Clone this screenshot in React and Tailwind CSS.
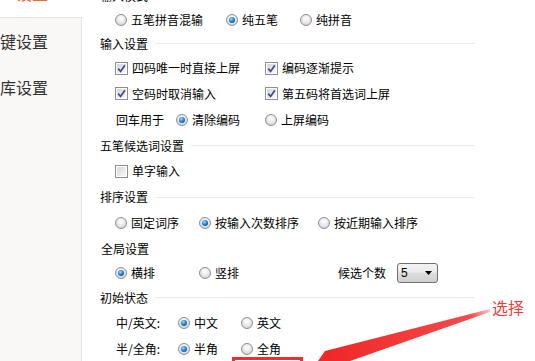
import React from "react";

const Radio = ({ checked }) => (
  <span className="inline-flex h-[12px] w-[12px] shrink-0 items-center justify-center rounded-full border border-[#8c8e90] bg-[radial-gradient(circle_at_50%_35%,#ffffff,#e8e8e8_50%,#c6c6c6)]">
    {checked && (
      <span className="h-[6px] w-[6px] rounded-full bg-[radial-gradient(circle_at_40%_35%,#9ee0ff,#1a78d0_50%,#0a3570)]" />
    )}
  </span>
);

const Check = ({ checked }) => (
  <span className="inline-flex h-[13px] w-[13px] shrink-0 border border-[#8f8f8f] bg-white p-[1px]">
    <span className="flex h-full w-full items-center justify-center bg-[linear-gradient(135deg,#d6d6d6,#f8f8f8)]">
      {checked && (
        <svg width="9" height="9" viewBox="0 0 9 9">
          <path d="M1.2 4.6 L3.6 7.4 L7.9 1.2" stroke="#3a4d8f" strokeWidth="1.7" fill="none" />
        </svg>
      )}
    </span>
  </span>
);

const Opt = ({ type = "radio", checked, label, w }) => (
  <label className={`flex items-center gap-[4px] ${w || ""}`}>
    {type === "radio" ? <Radio checked={checked} /> : <Check checked={checked} />}
    <span className="whitespace-nowrap">{label}</span>
  </label>
);

const Header = ({ title, h, line = true }) => (
  <div className={`flex items-center ${h}`}>
    <span className="whitespace-nowrap">{title}</span>
    {line && <span className="ml-[7px] h-px flex-1 bg-[#ebebeb]" />}
  </div>
);

export default function App() {
  return (
    <div className="relative flex h-[361px] w-[535px] overflow-hidden bg-white font-['Noto_Sans_CJK_SC',sans-serif] text-[12px] leading-none text-black">
      {/* left tabs */}
      <div className="flex w-[82px] shrink-0 flex-col text-[16px]">
        <div className="-mt-[31px] flex h-[48px] shrink-0 items-center pl-[16px] text-[#f0662e]">
          <span className="whitespace-nowrap">设置</span>
        </div>
        <div className="flex flex-1 flex-col border-t border-r border-[#e3e3e3] bg-[#f9f8f6] text-[#333333]">
          <div className="flex h-[46px] items-center">
            <span className="whitespace-nowrap">键设置</span>
          </div>
          <div className="flex h-[46px] items-center">
            <span className="whitespace-nowrap">库设置</span>
          </div>
        </div>
      </div>

      {/* settings */}
      <div className="-mt-[16px] flex w-[393px] shrink-0 flex-col pl-[18px]">
        <Header title="输入模式" h="h-[24px]" line={false} />
        <div className="flex h-[24px] items-center pl-[15px]">
          <Opt label="五笔拼音混输" w="w-[111px]" />
          <Opt label="纯五笔" checked w="w-[74px]" />
          <Opt label="纯拼音" />
        </div>

        <Header title="输入设置" h="h-[24px]" />
        <div className="flex h-[25px] items-center pl-[15px]">
          <Opt type="check" checked label="四码唯一时直接上屏" w="w-[150px]" />
          <Opt type="check" checked label="编码逐渐提示" />
        </div>
        <div className="flex h-[26px] items-center pl-[15px]">
          <Opt type="check" checked label="空码时取消输入" w="w-[150px]" />
          <Opt type="check" checked label="第五码将首选词上屏" />
        </div>
        <div className="flex h-[26px] items-center pl-[16px]">
          <span className="w-[60px]">回车用于</span>
          <Opt label="清除编码" checked w="w-[89px]" />
          <Opt label="上屏编码" />
        </div>

        <Header title="五笔候选词设置" h="h-[26px]" />
        <div className="flex h-[26px] items-center pl-[15px]">
          <Opt type="check" label="单字输入" />
        </div>

        <Header title="排序设置" h="h-[26px]" />
        <div className="flex h-[26px] items-center pl-[15px]">
          <Opt label="固定词序" w="w-[84px]" />
          <Opt label="按输入次数排序" checked w="w-[119px]" />
          <Opt label="按近期输入排序" />
        </div>

        <div className="pl-[1px]">
          <Header title="全局设置" h="h-[25px]" line={false} />
        </div>
        <div className="flex h-[24px] items-center pl-[15px]">
          <Opt label="横排" checked w="w-[84px]" />
          <Opt label="竖排" w="w-[139px]" />
          <span className="w-[59px]">候选个数</span>
          <div className="flex h-[20px] w-[41px] items-center justify-between rounded-[3px] border border-[#707070] bg-[linear-gradient(#f3f3f3,#ebebeb_45%,#dedede_50%,#d0d0d0)] pl-[3px] pr-[5px]">
            <span className="font-['Liberation_Sans',sans-serif] text-[12px]">5</span>
            <svg width="7" height="4" viewBox="0 0 7 4">
              <path d="M0 0H7L3.5 4Z" fill="#000" />
            </svg>
          </div>
        </div>

        <Header title="初始状态" h="h-[25px]" />
        <div className="flex h-[26px] items-center pl-[16px]">
          <span className="w-[62px]">中/英文:</span>
          <Opt label="中文" checked w="w-[63px]" />
          <Opt label="英文" />
        </div>
        <div className="flex h-[25px] items-center pl-[16px]">
          <span className="w-[62px]">半/全角:</span>
          <Opt label="半角" checked w="w-[63px]" />
          <Opt label="全角" />
        </div>
      </div>

      {/* annotation */}
      <div className="absolute left-[232px] top-[357px] h-[20px] w-[71px] border-[3px] border-[#f02e2e]" />
      <svg className="pointer-events-none absolute left-0 top-0" width="535" height="361" viewBox="0 0 535 361">
        <defs>
          <linearGradient id="arr" x1="490" y1="310" x2="330" y2="356" gradientUnits="userSpaceOnUse">
            <stop offset="0" stopColor="#ffc4c4" />
            <stop offset="0.12" stopColor="#f54a4a" />
            <stop offset="1" stopColor="#f02828" />
          </linearGradient>
        </defs>
        <polygon points="490,309 325,351 318,361 350,361 490,312" fill="url(#arr)" />
      </svg>
      <span className="absolute left-[492px] top-[299px] text-[16px] leading-none text-[#f03a3a]">选择</span>
    </div>
  );
}
